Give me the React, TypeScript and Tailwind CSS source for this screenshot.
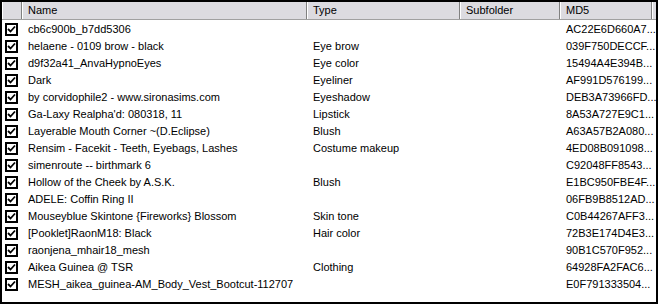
const rows: [string, string, string][] = [
  ["cb6c900b_b7dd5306", "", "AC22E6D660A7..."],
  ["helaene - 0109 brow - black", "Eye brow", "039F750DECCF..."],
  ["d9f32a41_AnvaHypnoEyes", "Eye color", "15494A4E394B..."],
  ["Dark", "Eyeliner", "AF991D576199..."],
  ["by corvidophile2 - www.sironasims.com", "Eyeshadow", "DEB3A73966FD..."],
  ["Ga-Laxy Realpha'd: 080318, 11", "Lipstick", "8A53A727E9C1..."],
  ["Layerable Mouth Corner ~(D.Eclipse)", "Blush", "A63A57B2A080..."],
  ["Rensim - Facekit - Teeth, Eyebags, Lashes", "Costume makeup", "4ED08B091098..."],
  ["simenroute -- birthmark 6", "", "C92048FF8543..."],
  ["Hollow of the Cheek by A.S.K.", "Blush", "E1BC950FBE4F..."],
  ["ADELE: Coffin Ring II", "", "06FB9B8512AD..."],
  ["Mouseyblue Skintone {Fireworks} Blossom", "Skin tone", "C0B44267AFF3..."],
  ["[Pooklet]RaonM18: Black", "Hair color", "72B3E174D4E3..."],
  ["raonjena_mhair18_mesh", "", "90B1C570F952..."],
  ["Aikea Guinea @ TSR", "Clothing", "64928FA2FAC6..."],
  ["MESH_aikea_guinea-AM_Body_Vest_Bootcut-112707", "", "E0F791333504..."],
];

function Check() {
  return (
    <div className="w-[13px] h-[13px] border-2 border-black bg-white flex items-center justify-center">
      <svg width="9" height="9" viewBox="0 0 9 9">
        <path d="M1 4 L3.5 6.5 L8 1.5" stroke="black" strokeWidth="1.8" fill="none" />
      </svg>
    </div>
  );
}

function Head({ w, label }: { w: string; label?: string }) {
  return (
    <div className={`${w} h-full shrink-0 border-l border-white border-r border-r-[#808080] pl-[5px] flex items-center`}>
      {label}
    </div>
  );
}

export default function App() {
  return (
    <div className="bg-white w-[660px] h-[306px] text-[11px] text-black" style={{ fontFamily: '"Liberation Sans", Arial, sans-serif' }}>
      <div className="w-[658px] h-[304px] border-2 border-black bg-white overflow-hidden">
        <div className="flex h-[18px] bg-[#dcdbe0] border-b border-[#a0a0a0]">
          <Head w="w-[20px]" />
          <Head w="w-[285px]" label="Name" />
          <Head w="w-[153px]" label="Type" />
          <Head w="w-[100px]" label="Subfolder" />
          <Head w="w-[92px]" label="MD5" />
          <div className="flex-1 border-l border-white" />
        </div>
        <div className="pt-[1px]">
          {rows.map(([name, type, md5]) => (
            <div key={name} className="flex h-[17px] items-center">
              <div className="w-[20px] shrink-0 pl-[3px]">
                <Check />
              </div>
              <div className="w-[285px] shrink-0 pl-[6px] whitespace-nowrap overflow-hidden">{name}</div>
              <div className="w-[153px] shrink-0 pl-[6px] whitespace-nowrap">{type}</div>
              <div className="w-[100px] shrink-0" />
              <div className="w-[92px] shrink-0 pl-[6px] whitespace-nowrap">{md5}</div>
            </div>
          ))}
        </div>
      </div>
    </div>
  );
}
